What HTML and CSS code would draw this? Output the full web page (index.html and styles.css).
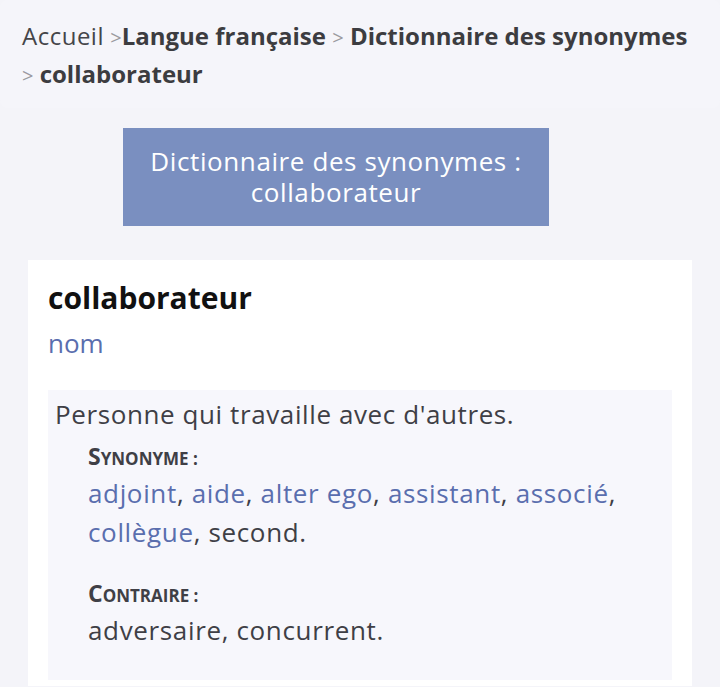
FILE: index.html
```html
<!DOCTYPE html>
<html lang="fr">
<head>
<meta charset="utf-8">
<title>collaborateur - Dictionnaire des synonymes</title>
<link rel="stylesheet" href="styles.css">
</head>
<body>
<nav class="breadcrumb">
  <span class="crumb-home">Accueil</span> <span class="sep">&gt;</span><a class="crumb" href="#">Langue française</a> <span class="sep">&gt;</span> <a class="crumb" href="#">Dictionnaire des synonymes</a> <span class="sep">&gt;</span> <span class="crumb">collaborateur</span>
</nav>
<h1 class="page-title">Dictionnaire des synonymes :<br>collaborateur</h1>
<section class="card">
  <h2 class="entry">collaborateur</h2>
  <p class="pos">nom</p>
  <div class="sense">
    <p class="def">Personne qui travaille avec d'autres.</p>
    <div class="group">
      <p class="label"><span class="cap">S</span>ynonyme :</p>
      <p class="words"><a href="#">adjoint</a>, <a href="#">aide</a>, <a href="#">alter ego</a>, <a href="#">assistant</a>, <a href="#">associé</a>, <a href="#">collègue</a>, second.</p>
    </div>
    <div class="group">
      <p class="label"><span class="cap">C</span>ontraire :</p>
      <p class="words">adversaire, concurrent.</p>
    </div>
  </div>
</section>
</body>
</html>
```

FILE: styles.css
```css
html, body {
  margin: 0;
  padding: 0;
}
body {
  background: #f4f4f9;
  font-family: "Open Sans", "Noto Sans", sans-serif;
  color: #3f3f46;
  width: 720px;
  height: 687px;
  overflow: hidden;
}
p { margin: 0; }
a { text-decoration: none; }

.breadcrumb {
  padding: 18px 22px 14px 22px;
  font-size: 24px;
  line-height: 36px;
  color: #454549;
  background: #f5f5fa;
  border-radius: 8px;
}
.crumb-home { font-weight: 400; letter-spacing: 0.5px; }
.sep { color: #9a9aa0; font-size: 20px; }
.crumb {
  color: #3c3c40;
  font-weight: 700;
}

.page-title {
  margin: 20px 0 0 123px;
  width: 426px;
  box-sizing: border-box;
  padding: 18px 6px;
  background: #7a8fc0;
  color: #ffffff;
  font-size: 26px;
  letter-spacing: 0.6px;
  font-weight: 400;
  line-height: 31px;
  text-align: center;
}

.card {
  margin: 34px 28px 0;
  background: #ffffff;
  padding: 18px 20px 6px 20px;
}
.entry {
  margin: 0;
  font-size: 30px;
  line-height: 40px;
  font-weight: 700;
  color: #111111;
}
.pos {
  margin-top: 9px;
  color: #5a6eae;
  font-size: 26px;
  line-height: 32px;
}
.sense {
  margin-top: 31px;
  background: #f7f7fc;
  padding: 7px 6px 30px 7px;
}
.def {
  font-size: 26px;
  letter-spacing: 0.6px;
  line-height: 34px;
  color: #3f3f46;
}
.group {
  padding-left: 33px;
  margin-top: 10px;
}
.group + .group { margin-top: 26px; }
.label {
  font-size: 17px;
  font-weight: 700;
  text-transform: uppercase;
  color: #3f3f46;
  line-height: 30px;
}
.label .cap { font-size: 23px; }
.words {
  font-size: 26px;
  letter-spacing: 0.65px;
  line-height: 39px;
  color: #3f3f46;
}
.words a { color: #5a6eae; }
```
